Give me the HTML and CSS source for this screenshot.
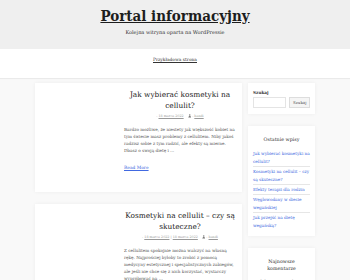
FILE: index.html
```html
<!DOCTYPE html>
<html lang="pl">
<head>
    <meta charset="UTF-8">
    <meta name="viewport" content="width=device-width, initial-scale=1.0">
    <title>Portal informacyjny</title>
    <link rel="stylesheet" href="styles.css">
</head>
<body>
    <header class="site-header">
        <h1 class="site-title"><a href="#">Portal informacyjny</a></h1>
        <p class="site-desc">Kolejna witryna oparta na WordPressie</p>
    </header>
    <nav class="main-nav">
        <a href="#">Przykładowa strona</a>
    </nav>
    <div class="site-content">
        <main class="posts">
            <article class="post">
                <div class="post-thumb"></div>
                <div class="post-body">
                    <h2 class="post-title">Jak wybierać kosmetyki na cellulit?</h2>
                    <div class="post-meta">
                        <span>- <a href="#">18 marca 2022</a></span>
                        <span class="author"><svg viewBox="0 0 10 10"><circle cx="5" cy="3" r="2.2"/><path d="M1 10c0-3 2-4.5 4-4.5s4 1.5 4 4.5z"/></svg>- <a href="#">bandi</a></span>
                    </div>
                    <p class="excerpt">Bardzo możliwe, że niestety jak większość kobiet na tym świecie masz problemy z cellulitem. Niby jakoś radzisz sobie z tym radzić, ale efekty są mierne. Dbasz o swoją dietę i …</p>
                    <a class="read-more" href="#">Read More</a>
                </div>
            </article>
            <article class="post">
                <div class="post-thumb"></div>
                <div class="post-body">
                    <h2 class="post-title">Kosmetyki na cellulit – czy są skuteczne?</h2>
                    <div class="post-meta">
                        <span>- <a href="#">18 marca 2022</a> | <a href="#">18 marca 2022</a></span>
                        <span class="author"><svg viewBox="0 0 10 10"><circle cx="5" cy="3" r="2.2"/><path d="M1 10c0-3 2-4.5 4-4.5s4 1.5 4 4.5z"/></svg>- <a href="#">bandi</a></span>
                    </div>
                    <p class="excerpt">Z cellulitem spokojnie można walczyć na własną rękę. Najprościej byłoby to zrobić z pomocą medycyny estetycznej i specjalistycznych zabiegów, ale jeśli nie chce się z nich korzystać, wystarczy wypróbować na …</p>
                    <a class="read-more" href="#">Read More</a>
                </div>
            </article>
        </main>
        <aside class="sidebar">
            <section class="widget search-widget">
                <label class="search-label" for="s">Szukaj</label>
                <form class="search-form">
                    <input type="text" id="s">
                    <button type="button">Szukaj</button>
                </form>
            </section>
            <section class="widget">
                <h3 class="widget-title">Ostatnie wpisy</h3>
                <ul class="widget-list">
                    <li><a href="#">Jak wybierać kosmetyki na cellulit?</a></li>
                    <li><a href="#">Kosmetyki na cellulit – czy są skuteczne?</a></li>
                    <li><a href="#">Efekty terapii dla rodzin</a></li>
                    <li><a href="#">Węglowodany w diecie wegańskiej</a></li>
                    <li><a href="#">Jak przejść na dietę wegańską?</a></li>
                </ul>
            </section>
            <section class="widget">
                <h3 class="widget-title">Najnowsze komentarze</h3>
                <p class="widget-text">Brak komentarzy do wyświetlenia.</p>
            </section>
        </aside>
    </div>
</body>
</html>
```
FILE: styles.css
```css
body {
    margin: 0;
    font-family: 'DejaVu Serif', 'Liberation Serif', serif;
    background-color: #f9f9f9;
    color: #444;
}

a {
    color: inherit;
}

.site-header {
    background-color: #efefef;
    text-align: center;
    height: 49px;
    box-sizing: border-box;
    padding-top: 6px;
}

.site-title {
    margin: 0;
    font-family: 'DejaVu Serif Condensed', 'DejaVu Serif', serif;
    font-size: 15px;
    line-height: 20px;
    font-weight: bold;
}

    .site-title a {
        color: #1d1d1d;
    }

.site-desc {
    margin: 3px 0 0;
    font-size: 5px;
    line-height: 7px;
    color: #333;
}

.main-nav {
    background-color: #fff;
    height: 29px;
    box-sizing: border-box;
    padding-top: 8px;
    text-align: center;
    box-shadow: 0 1px 1px rgba(0, 0, 0, 0.06);
    font-size: 4.4px;
    line-height: 6px;
}

    .main-nav a {
        color: #333;
    }

.site-content {
    width: 280px;
    margin: 5px auto 0;
    display: grid;
    grid-template-columns: 207px 67px;
    column-gap: 6px;
    align-items: start;
}

.posts {
    display: flex;
    flex-direction: column;
    gap: 12px;
}

.post {
    background-color: #fff;
    box-shadow: 0 0 4px rgba(0, 0, 0, 0.05);
    display: flex;
    padding: 7px 4px 19px 0;
}

.post-thumb {
    width: 87px;
    flex-shrink: 0;
}

.post-body {
    flex: 1;
}

.post-title {
    margin: 0 1px;
    text-align: center;
    font-size: 7.4px;
    line-height: 10.5px;
    font-weight: normal;
    color: #222;
}

.post-meta {
    margin-top: 3px;
    text-align: center;
    font-size: 3.3px;
    color: #999;
    display: flex;
    justify-content: center;
    gap: 4px;
}

    .post-meta svg {
        width: 3.5px;
        height: 3.5px;
        fill: #777;
        vertical-align: -0.5px;
        margin-right: 1px;
    }

.excerpt {
    margin: 8px 0 0 2px;
    font-size: 4.2px;
    line-height: 7px;
    color: #555;
}

.read-more {
    display: inline-block;
    margin: 7px 0 0 2px;
    font-size: 4.4px;
    color: #4169e1;
}

.sidebar {
    display: flex;
    flex-direction: column;
    gap: 12px;
}

.widget {
    background-color: #fff;
    box-shadow: 0 0 4px rgba(0, 0, 0, 0.05);
    padding: 7px 5px 6px;
}

.search-widget {
    padding-bottom: 6px;
}

.search-label {
    display: block;
    font-size: 4.2px;
    font-weight: bold;
    color: #333;
}

.search-form {
    display: flex;
    gap: 3px;
    margin-top: 2px;
}

    .search-form input {
        width: 33px;
        height: 11px;
        box-sizing: border-box;
        border: 1px solid #e4e4e4;
        padding: 0;
    }

    .search-form button {
        height: 11px;
        padding: 0 3px;
        font-family: inherit;
        font-size: 4px;
        color: #555;
        background-color: #f5f5f5;
        border: 1px solid #ddd;
    }

.widget-title {
    margin: 3px 0 6px;
    padding: 0 9px;
    text-align: center;
    font-size: 4.8px;
    line-height: 7px;
    font-weight: normal;
    color: #333;
}

.widget-list {
    list-style: none;
    margin: 0;
    padding: 0;
}

    .widget-list li {
        font-size: 4.2px;
        line-height: 8px;
        padding: 0.5px 0;
        border-bottom: 1px solid #e6e6e6;
    }

        .widget-list li:last-child {
            border-bottom: none;
        }

    .widget-list a {
        color: #4169e1;
        text-decoration: none;
    }

.widget-text {
    margin: 0;
    font-size: 4.2px;
    line-height: 7px;
}
```
